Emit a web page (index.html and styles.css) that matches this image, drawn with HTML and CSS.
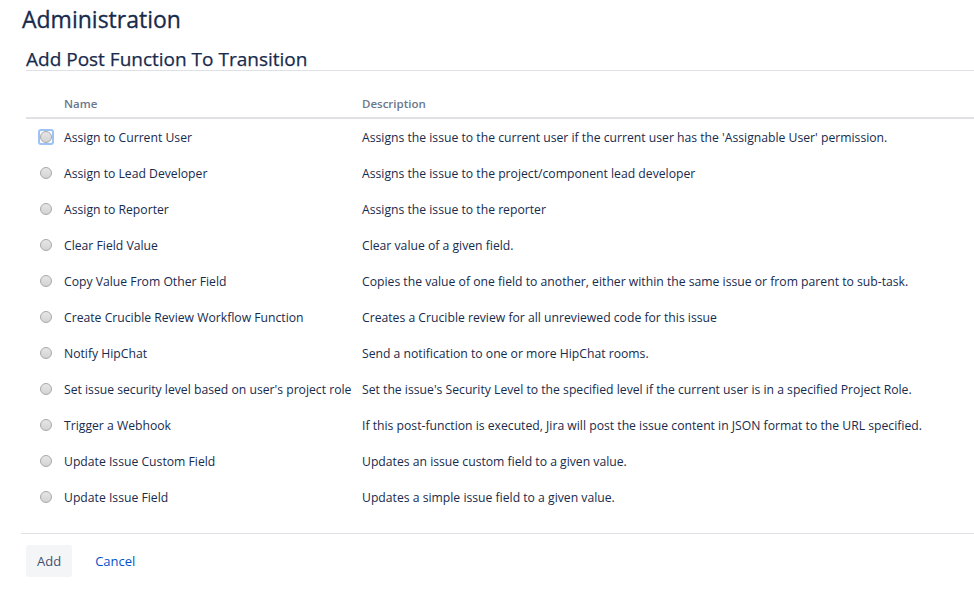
FILE: index.html
```html
<!DOCTYPE html>
<html lang="en">
<head>
    <meta charset="UTF-8">
    <title>Add Post Function To Transition - Administration</title>
    <link rel="stylesheet" href="styles.css">
</head>
<body>
    <div class="page">
        <h1>Administration</h1>

        <div class="section">
            <h2>Add Post Function To Transition</h2>

            <!-- Post function list -->
            <table class="functions">
                <colgroup>
                    <col class="col-radio">
                    <col class="col-name">
                    <col>
                </colgroup>
                <thead>
                    <tr>
                        <th></th>
                        <th>Name</th>
                        <th>Description</th>
                    </tr>
                </thead>
                <tbody>
                    <tr>
                        <td><span class="focus-ring"><input type="radio" name="fn" id="fn1"></span></td>
                        <td><label for="fn1">Assign to Current User</label></td>
                        <td>Assigns the issue to the current user if the current user has the 'Assignable User' permission.</td>
                    </tr>
                    <tr>
                        <td><input type="radio" name="fn" id="fn2"></td>
                        <td><label for="fn2">Assign to Lead Developer</label></td>
                        <td>Assigns the issue to the project/component lead developer</td>
                    </tr>
                    <tr>
                        <td><input type="radio" name="fn" id="fn3"></td>
                        <td><label for="fn3">Assign to Reporter</label></td>
                        <td>Assigns the issue to the reporter</td>
                    </tr>
                    <tr>
                        <td><input type="radio" name="fn" id="fn4"></td>
                        <td><label for="fn4">Clear Field Value</label></td>
                        <td>Clear value of a given field.</td>
                    </tr>
                    <tr>
                        <td><input type="radio" name="fn" id="fn5"></td>
                        <td><label for="fn5">Copy Value From Other Field</label></td>
                        <td>Copies the value of one field to another, either within the same issue or from parent to sub-task.</td>
                    </tr>
                    <tr>
                        <td><input type="radio" name="fn" id="fn6"></td>
                        <td><label for="fn6">Create Crucible Review Workflow Function</label></td>
                        <td>Creates a Crucible review for all unreviewed code for this issue</td>
                    </tr>
                    <tr>
                        <td><input type="radio" name="fn" id="fn7"></td>
                        <td><label for="fn7">Notify HipChat</label></td>
                        <td>Send a notification to one or more HipChat rooms.</td>
                    </tr>
                    <tr>
                        <td><input type="radio" name="fn" id="fn8"></td>
                        <td><label for="fn8">Set issue security level based on user's project role</label></td>
                        <td>Set the issue's Security Level to the specified level if the current user is in a specified Project Role.</td>
                    </tr>
                    <tr>
                        <td><input type="radio" name="fn" id="fn9"></td>
                        <td><label for="fn9">Trigger a Webhook</label></td>
                        <td>If this post-function is executed, Jira will post the issue content in JSON format to the URL specified.</td>
                    </tr>
                    <tr>
                        <td><input type="radio" name="fn" id="fn10"></td>
                        <td><label for="fn10">Update Issue Custom Field</label></td>
                        <td>Updates an issue custom field to a given value.</td>
                    </tr>
                    <tr>
                        <td><input type="radio" name="fn" id="fn11"></td>
                        <td><label for="fn11">Update Issue Field</label></td>
                        <td>Updates a simple issue field to a given value.</td>
                    </tr>
                </tbody>
            </table>
        </div>

        <!-- Buttons -->
        <div class="buttons">
            <button type="submit" class="btn-add">Add</button>
            <a href="#" class="cancel">Cancel</a>
        </div>
    </div>
</body>
</html>
```

FILE: styles.css
```css
/* Theme Colors */
:root {
    --text: #172b4d;
    --subtle: #6b778c;
    --border: #dfe1e6;
    --link: #0052cc;
    --button: #f4f5f7;
}

body {
    font-family: "Open Sans", Arial, sans-serif;
    font-size: 12.2px;
    color: var(--text);
    background-color: #fff;
    margin: 0;
    overflow: hidden;
}

.page {
    padding-left: 21px;
}

h1 {
    margin: 0;
    padding: 3px 0 0 1px;
    font-size: 23px;
    font-weight: 500;
    line-height: 32px;
    -webkit-text-stroke: 0.3px var(--text);
}

/* Section */
.section {
    margin-left: 5px;
}

h2 {
    margin: 14px 0 0;
    font-size: 19px;
    font-weight: 500;
    line-height: 21px;
    border-bottom: 1px solid var(--border);
    -webkit-text-stroke: 0.25px var(--text);
}

/* Table */
.functions {
    margin-top: 18px;
    width: 100%;
    border-collapse: collapse;
    table-layout: fixed;
}

.col-radio {
    width: 38px;
}

.col-name {
    width: 298px;
}

th {
    text-align: left;
    font-size: 11.5px;
    font-weight: 600;
    color: var(--subtle);
    height: 28px;
    padding: 0;
    border-bottom: 2px solid var(--border);
}

td {
    height: 36px;
    padding: 0;
    white-space: nowrap;
    vertical-align: middle;
}

label {
    cursor: pointer;
}

input[type="radio"] {
    appearance: none;
    display: block;
    width: 12px;
    height: 12px;
    margin: 0 0 0 14px;
    border: 1px solid #a9a9a9;
    border-radius: 50%;
    background: linear-gradient(#e6e6e6, #d3d3d3);
    box-sizing: border-box;
}

.focus-ring {
    display: block;
    width: 12px;
    margin-left: 12px;
    border: 2px solid #9ec2f7;
    border-radius: 3px;
}

.focus-ring input[type="radio"] {
    margin: 0;
}

/* Footer */
.buttons {
    margin-top: 18px;
    border-top: 1px solid var(--border);
    padding: 11px 0 0 5px;
    display: flex;
    align-items: center;
    gap: 23px;
}

.btn-add {
    height: 32px;
    padding: 0 11px;
    font-family: inherit;
    font-size: 13px;
    color: #42526e;
    background-color: var(--button);
    border: none;
    border-radius: 3px;
    cursor: pointer;
}

.cancel {
    font-size: 13px;
    color: var(--link);
    text-decoration: none;
}
```
